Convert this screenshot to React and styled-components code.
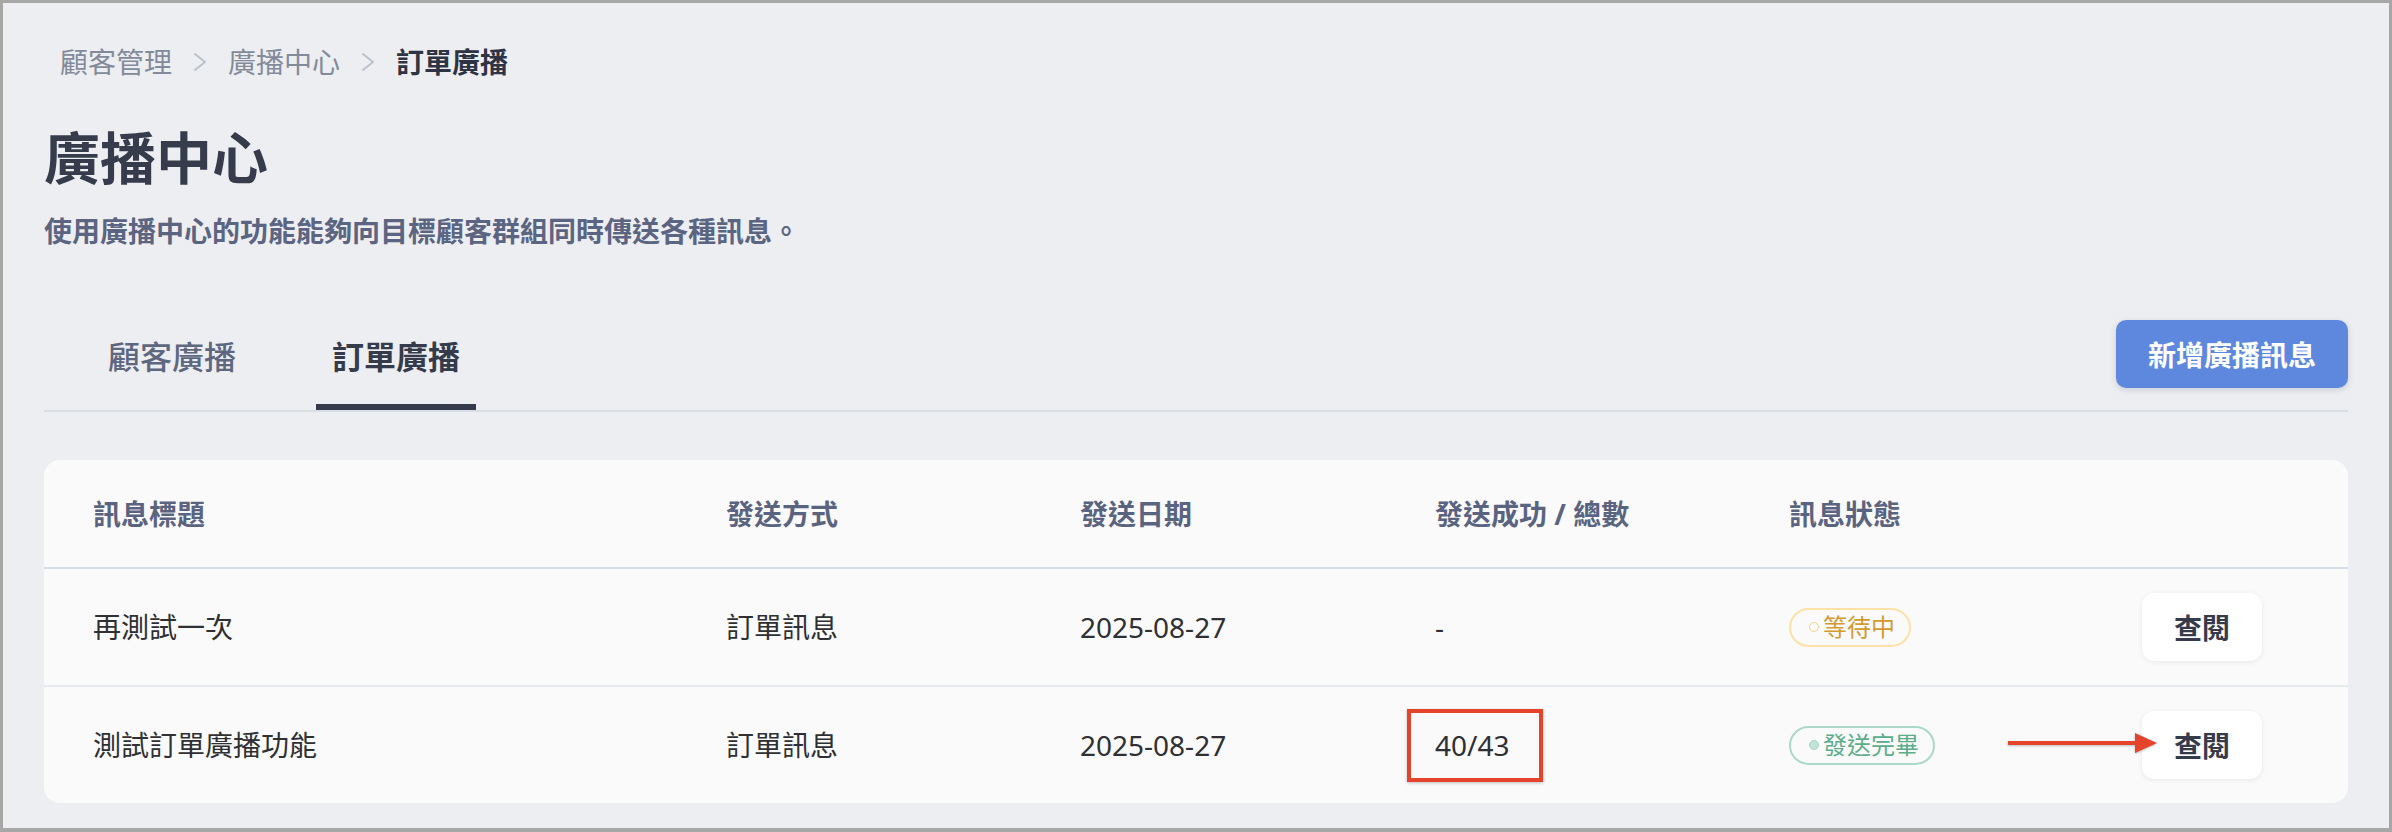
import React from 'react';
import styled, { createGlobalStyle } from 'styled-components';

const GlobalStyle = createGlobalStyle`
  html, body { margin: 0; padding: 0; background: #a7a7a7; }
  body { font-family: "Noto Sans", "Noto Sans CJK TC", sans-serif; }
  *, *::before, *::after { box-sizing: border-box; }
`;

const Frame = styled.div`
  width: 2392px;
  height: 832px;
  border: 3px solid #a7a7a7;
  border-bottom-width: 4px;
  background: #edeef1;
  padding: 39px 41px 0;
  overflow: hidden;
`;

const Breadcrumb = styled.nav`
  display: flex;
  align-items: center;
  gap: 21px;
  padding-left: 16px;
  height: 40px;
  font-size: 28px;
  line-height: 40px;
`;

const Crumb = styled.span`
  color: ${(p) => (p.$current ? '#2f3444' : '#838b9b')};
  font-weight: ${(p) => (p.$current ? 700 : 400)};
`;

const Chevron = () => (
  <svg width="14" height="20" viewBox="0 0 14 20" fill="none">
    <polyline points="2,2 12,10 2,18" stroke="#bac1cc" strokeWidth="2" strokeLinecap="round" strokeLinejoin="round" />
  </svg>
);

const Title = styled.h1`
  margin: 39px 0 0;
  font-size: 56px;
  line-height: 72px;
  font-weight: 700;
  color: #363c4c;
`;

const Subtitle = styled.p`
  margin: 18px 0 0;
  font-size: 28px;
  line-height: 40px;
  font-weight: 600;
  color: #5b6582;
`;

const TabBar = styled.div`
  margin-top: 49px;
  height: 112px;
  display: flex;
  align-items: center;
  justify-content: space-between;
  border-bottom: 2px solid #d8dee6;
  padding-left: 48px;
`;

const TabList = styled.div`
  display: flex;
  gap: 64px;
  height: 110px;
`;

const Tab = styled.div`
  height: 110px;
  padding: 0 16px;
  display: flex;
  align-items: center;
  font-size: 32px;
  border-top: 6px solid transparent;
  border-bottom: 6px solid ${(p) => (p.$active ? '#353b4b' : 'transparent')};
  color: ${(p) => (p.$active ? '#353b4b' : '#5e6780')};
  font-weight: ${(p) => (p.$active ? 700 : 500)};
`;

const PrimaryButton = styled.button`
  height: 68px;
  padding: 0 32px;
  border: none;
  border-radius: 10px;
  background: #5e88de;
  color: #ffffff;
  font-family: inherit;
  font-size: 28px;
  font-weight: 700;
  box-shadow: 0 2px 6px rgba(40, 60, 100, 0.18);
  margin-bottom: 2px;
`;

const Card = styled.div`
  margin-top: 48px;
  background: #fafafa;
  border-radius: 16px;
`;

const Row = styled.div`
  position: relative;
  display: grid;
  grid-template-columns: 633px 354px 355px 354px 1fr 120px;
  align-items: center;
  padding: 0 86px 0 49px;
  height: ${(p) => (p.$header ? '109px' : p.$last ? '116px' : '118px')};
  border-bottom: ${(p) =>
    p.$last ? 'none' : p.$header ? '2px solid #d6dde6' : '2px solid #e6e9ee'};
  font-size: 28px;
  line-height: 40px;
  color: ${(p) => (p.$header ? '#5a6480' : '#2f3033')};
  font-weight: ${(p) => (p.$header ? 700 : 400)};
`;

const Cell = styled.div`
  position: relative;
  display: flex;
  align-items: center;
`;

const Highlight = styled.span`
  display: inline-block;
  margin-left: -28px;
  padding: 14px 30px 15px 24px;
  line-height: 36px;
  border: 4px solid #e5432b;
  box-shadow: 0 1px 3px rgba(0, 0, 0, 0.25);
`;

const badgeTones = {
  pending: { border: '#fce2a6', text: '#d39a2e', dot: '#f5d48a', fill: 'transparent' },
  done: { border: '#acd9c7', text: '#5cad8a', dot: '#a9d6c4', fill: '#c4e3d7' },
};

const Badge = styled.span`
  display: inline-flex;
  align-items: center;
  gap: 4px;
  height: 39px;
  padding: 0 14px 0 18px;
  border-radius: 999px;
  border: 2px solid ${(p) => badgeTones[p.$tone].border};
  color: ${(p) => badgeTones[p.$tone].text};
  font-size: 24px;
  line-height: 30px;
`;

const Dot = styled.span`
  width: 10px;
  height: 10px;
  border-radius: 50%;
  border: 1.5px solid ${(p) => badgeTones[p.$tone].dot};
  background: ${(p) => badgeTones[p.$tone].fill};
`;

const ViewButton = styled.button`
  width: 120px;
  height: 68px;
  border: none;
  border-radius: 12px;
  background: #ffffff;
  box-shadow: 0 1px 5px rgba(0, 0, 0, 0.08);
  font-family: inherit;
  font-size: 28px;
  font-weight: 700;
  color: #353b4b;
`;

const ArrowMark = styled.svg`
  position: absolute;
  left: 219px;
  top: calc(50% - 14px);
  z-index: 2;
  overflow: visible;
  filter: drop-shadow(0 1px 1px rgba(0, 0, 0, 0.25));
`;

const Arrow = () => (
  <ArrowMark width="150" height="24" viewBox="0 0 150 24">
    <rect x="0" y="10" width="130" height="4" fill="#e5432b" />
    <polygon points="127,2 149,12 127,22" fill="#e5432b" />
  </ArrowMark>
);

const rows = [
  { title: '再測試一次', method: '訂單訊息', date: '2025-08-27', count: '-', tone: 'pending', status: '等待中' },
  { title: '測試訂單廣播功能', method: '訂單訊息', date: '2025-08-27', count: '40/43', tone: 'done', status: '發送完畢', marked: true },
];

export default function App() {
  return (
    <>
      <GlobalStyle />
      <Frame>
        <Breadcrumb>
          <Crumb>顧客管理</Crumb>
          <Chevron />
          <Crumb>廣播中心</Crumb>
          <Chevron />
          <Crumb $current>訂單廣播</Crumb>
        </Breadcrumb>
        <Title>廣播中心</Title>
        <Subtitle>使用廣播中心的功能能夠向目標顧客群組同時傳送各種訊息。</Subtitle>

        <TabBar>
          <TabList>
            <Tab>顧客廣播</Tab>
            <Tab $active>訂單廣播</Tab>
          </TabList>
          <PrimaryButton>新增廣播訊息</PrimaryButton>
        </TabBar>

        <Card>
          <Row $header>
            <Cell>訊息標題</Cell>
            <Cell>發送方式</Cell>
            <Cell>發送日期</Cell>
            <Cell>發送成功 / 總數</Cell>
            <Cell>訊息狀態</Cell>
            <Cell />
          </Row>
          {rows.map((r, i) => (
            <Row key={r.title} $last={i === rows.length - 1}>
              <Cell>{r.title}</Cell>
              <Cell>{r.method}</Cell>
              <Cell>{r.date}</Cell>
              <Cell>{r.marked ? <Highlight>{r.count}</Highlight> : r.count}</Cell>
              <Cell>
                <Badge $tone={r.tone}>
                  <Dot $tone={r.tone} />
                  {r.status}
                </Badge>
                {r.marked && <Arrow />}
              </Cell>
              <Cell>
                <ViewButton>查閱</ViewButton>
              </Cell>
            </Row>
          ))}
        </Card>
      </Frame>
    </>
  );
}
